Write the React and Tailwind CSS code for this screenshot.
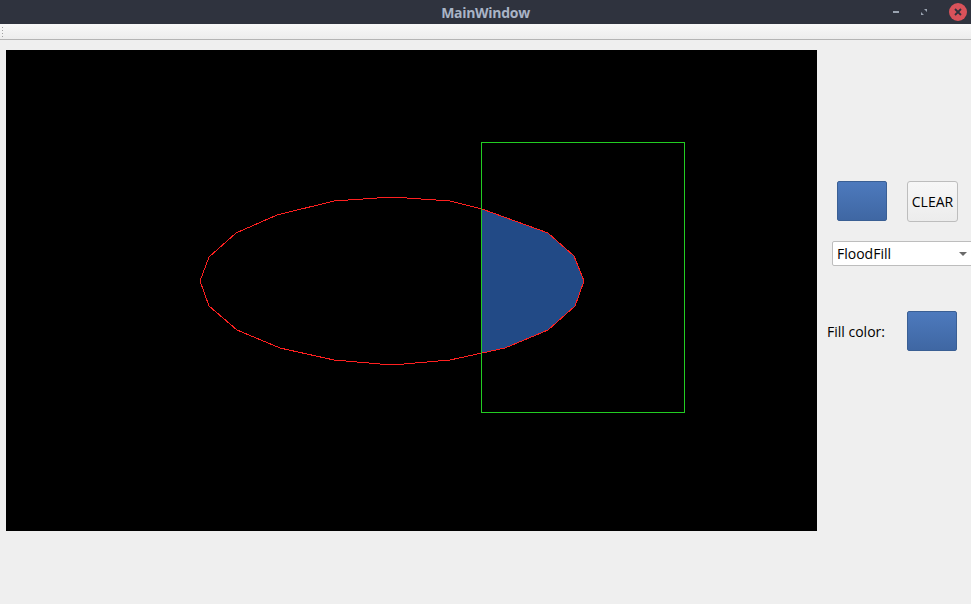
const ELLIPSE = [
  [200, 281], [209, 257], [236, 233], [277, 215], [334, 201], [392, 197], [450, 201], [482, 209],
  [548, 233], [574, 256], [584, 281], [575, 306], [548, 330], [505, 348], [450, 360], [392, 365],
  [334, 360], [280, 348], [237, 330], [209, 306],
]

const FILL = [[481, 209], [548, 233], [574, 256], [584, 281], [575, 306], [548, 330], [505, 348], [481, 353]]

const pts = (arr) => arr.map(([x, y]) => `${x - 6},${y - 50}`).join(' ')

function ColorButton() {
  return (
    <div className="w-[50px] h-[40px] rounded-[2px] border border-[#3a5f94] bg-gradient-to-b from-[#4d7abd] to-[#3f67a3]" />
  )
}

export default function App() {
  return (
    <div className="w-[971px] h-[604px] bg-[#efefef] flex flex-col overflow-hidden" style={{ fontFamily: '"Open Sans", "DejaVu Sans", sans-serif' }}>
      <div className="h-[24px] bg-[#2f333e] flex items-center relative">
        <div className="flex-1 text-center text-[14px] font-bold text-[#a9b4c6] tracking-[-0.3px]" style={{ fontFamily: '"Open Sans", sans-serif' }}>
          MainWindow
        </div>
        <div className="absolute right-[4px] top-[3px] flex items-center gap-[20px]">
          <div className="w-[6px] h-[2px] bg-[#9aa3b0]" />
          <svg width="10" height="10" viewBox="0 0 10 10">
            <path d="M5 2h3v3z M2 5l3 3H2z" fill="#9aa3b0" />
          </svg>
          <div className="w-[18px] h-[18px] rounded-full bg-[#d9525a] flex items-center justify-center">
            <svg width="8" height="8" viewBox="0 0 8 8">
              <path d="M1 1l6 6M7 1l-6 6" stroke="#2f333e" strokeWidth="1.8" />
            </svg>
          </div>
        </div>
      </div>
      <div className="h-[16px] bg-gradient-to-b from-[#f8f8f8] to-[#ededed] border-b border-[#b4b4b4] flex">
        <div className="ml-[1px] mt-[2px] w-[4px] h-[12px] bg-[radial-gradient(#a0a0a0_1px,transparent_1px)] bg-[length:3px_3px]" />
      </div>
      <div className="flex">
        <div className="ml-[6px] mt-[10px] w-[811px] h-[481px] bg-black">
          <svg width="811" height="481" viewBox="0 0 811 481" shapeRendering="crispEdges">
            <polygon points={pts(FILL)} fill="#224a86" />
            <polygon points={pts(ELLIPSE)} fill="none" stroke="#ff2020" strokeWidth="1" />
            <rect x={481 - 6 + 0.5} y={142 - 50 + 0.5} width="203" height="270" fill="none" stroke="#22cc22" strokeWidth="1" />
          </svg>
        </div>
        <div className="flex-1 flex flex-col">
          <div className="mt-[141px] ml-[20px] flex gap-[20px]">
            <ColorButton />
            <div className="w-[51px] h-[41px] rounded-[3px] border border-[#bdbdbd] bg-gradient-to-b from-[#f7f7f7] to-[#ececec] flex items-center justify-center text-[14px] text-black">
              CLEAR
            </div>
          </div>
          <div className="mt-[19px] ml-[15px] w-[145px] h-[25px] rounded-[2px] border border-[#bdbdbd] bg-white flex items-center pl-[4px] pb-[1px] text-[14px] text-black relative">
            FloodFill
            <svg className="absolute left-[126px] top-[10px]" width="8" height="4" viewBox="0 0 8 4">
              <path d="M0 0h8L4 4z" fill="#6a6a6a" />
            </svg>
          </div>
          <div className="mt-[45px] ml-[10px] flex items-center">
            <div className="w-[80px] text-[14px] text-black">Fill color:</div>
            <ColorButton />
          </div>
        </div>
      </div>
    </div>
  )
}
